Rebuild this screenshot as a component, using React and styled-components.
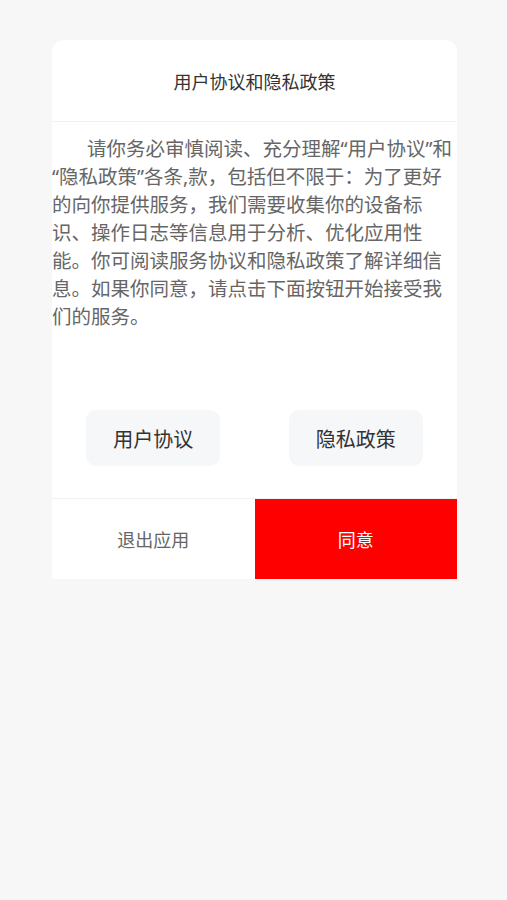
import React from 'react';
import styled, { createGlobalStyle } from 'styled-components';

const GlobalStyle = createGlobalStyle`
	body {
		margin: 0;
		background-color: #f7f7f7;
		font-family: "Noto Sans", "Noto Sans CJK SC", sans-serif;
	}
`;

const Page = styled.div`
	min-height: 900px;
	padding: 40px 50px 0 52px;
	box-sizing: border-box;
`;

const Dialog = styled.div`
	width: 405px;
	background-color: #fff;
	border-radius: 12px 12px 0 0;
	overflow: hidden;
	display: flex;
	flex-direction: column;
`;

const Header = styled.div`
	height: 81px;
	display: flex;
	align-items: center;
	justify-content: center;
	font-size: 18px;
	color: #333;
	border-bottom: 1px solid #f2f2f2;
`;

const Body = styled.p`
	margin: 0;
	padding-top: 13px;
	font-size: 19.5px;
	line-height: 28px;
	color: #666;
	text-indent: 35px;
`;

const LinkRow = styled.div`
	display: flex;
	padding: 79px 0 32px;
`;

const LinkCell = styled.div`
	flex: 1;
	display: flex;
	justify-content: center;
`;

const LinkButton = styled.button`
	width: 134px;
	height: 56px;
	border: none;
	border-radius: 10px;
	background-color: #f6f7f9;
	color: #333;
	font-family: inherit;
	font-size: 20px;
	padding: 0;
`;

const Footer = styled.div`
	display: flex;
	border-top: 1px solid #f2f2f2;
`;

const FooterButton = styled.button`
	flex: 1;
	height: 80px;
	border: none;
	padding: 0;
	font-family: inherit;
	font-size: 18px;
	color: ${p => (p.$primary ? '#fff' : '#666')};
	background-color: ${p => (p.$primary ? '#ff0000' : '#fff')};
`;

export default function App() {
	return (
		<Page>
			<GlobalStyle />
			<Dialog>
				<Header>用户协议和隐私政策</Header>
				<Body>
					请你务必审慎阅读、充分理解“用户协议”和<wbr />“隐私政策”各条,款，包括但不限于：为了更好的向你提供服务，我们需要收集你的设备标识、操作日志等信息用于分析、优化应用性能。你可阅读服务协议和隐私政策了解详细信息。如果你同意，请点击下面按钮开始接受我们的服务。
				</Body>
				<LinkRow>
					<LinkCell>
						<LinkButton>用户协议</LinkButton>
					</LinkCell>
					<LinkCell>
						<LinkButton>隐私政策</LinkButton>
					</LinkCell>
				</LinkRow>
				<Footer>
					<FooterButton>退出应用</FooterButton>
					<FooterButton $primary>同意</FooterButton>
				</Footer>
			</Dialog>
		</Page>
	);
}
